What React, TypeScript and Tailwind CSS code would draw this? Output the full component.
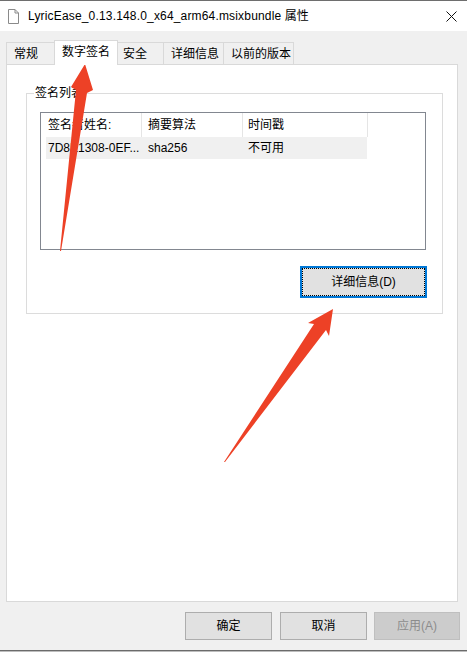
import React from "react";

function FileIcon() {
  return (
    <svg width="11" height="15" viewBox="0 0 11 15" className="block">
      <path d="M0.5 0.5 H7 L10.5 4 V14.5 H0.5 Z" fill="#fff" stroke="#8a8a8a" strokeWidth="1" />
      <path d="M7 0.5 V4 H10.5" fill="none" stroke="#8a8a8a" strokeWidth="1" />
    </svg>
  );
}

function CloseIcon() {
  return (
    <svg width="11" height="11" viewBox="0 0 11 11" className="block">
      <path d="M0.5 0.5 L10.5 10.5 M10.5 0.5 L0.5 10.5" stroke="#111" strokeWidth="1" />
    </svg>
  );
}

export default function App() {
  return (
    <div className="relative w-[467px] h-[652px] overflow-hidden bg-[#f0f0f0] flex flex-col text-[12px] text-black font-['Liberation_Sans','Noto_Sans_CJK_SC',sans-serif]">
      {/* title bar */}
      <div className="h-[31px] shrink-0 bg-white border-t border-[#6e6e6e] flex items-center">
        <div className="ml-[8px]">
          <FileIcon />
        </div>
        <div className="ml-[9px] leading-[16px] whitespace-nowrap">
          <span className="tracking-[0.17px]">LyricEase_0.13.148.0_x64_arm64.msixbundle</span> 属性
        </div>
        <div className="ml-auto mr-[10px]">
          <CloseIcon />
        </div>
      </div>

      {/* tabs */}
      <div className="mt-[9px] pl-[6px] h-[24px] flex items-end shrink-0">
        <div className="w-[49px] h-[22px] border-t border-l border-r border-[#d9d9d9] flex items-center pl-[7px] leading-[16px]">
          常规
        </div>
        <div className="relative z-10 -ml-px w-[64px] h-[25px] -mb-px bg-white border-t border-l border-r border-[#d9d9d9] flex items-center pl-[7px] pb-[2px] leading-[16px]">
          数字签名
        </div>
        <div className="-ml-px w-[47px] h-[22px] border-t border-l border-r border-[#d9d9d9] flex items-center pl-[5px] leading-[16px]">
          安全
        </div>
        <div className="-ml-px w-[61px] h-[22px] border-t border-l border-r border-[#d9d9d9] flex items-center pl-[7px] leading-[16px]">
          详细信息
        </div>
        <div className="-ml-px w-[71px] h-[22px] border-t border-l border-r border-[#d9d9d9] flex items-center pl-[7px] leading-[16px]">
          以前的版本
        </div>
      </div>

      {/* panel */}
      <div className="ml-[6px] w-[452px] h-[538px] shrink-0 bg-white border border-[#d9d9d9]">
        {/* group box */}
        <div className="relative ml-[19px] mt-[28px] w-[417px] h-[221px] border border-[#dcdcdc]">
          <div className="absolute left-[7px] top-[-9px] bg-white px-[1px] leading-[16px]">签名列表</div>

          {/* list view */}
          <div className="ml-[13px] mt-[18px] w-[386px] h-[138px] border border-[#828790] bg-white">
            <div className="flex h-[24px]">
              <div className="w-[101px] border-r border-[#e5e5e5] pl-[7px] flex items-center leading-[16px]">
                签名者姓名:
              </div>
              <div className="w-[101px] border-r border-[#e5e5e5] pl-[6px] flex items-center leading-[16px]">
                摘要算法
              </div>
              <div className="w-[125px] border-r border-[#e5e5e5] pl-[5px] flex items-center leading-[16px]">
                时间戳
              </div>
            </div>
            <div className="ml-[5px] w-[321px] h-[22px] bg-[#f0f0f0] flex items-center leading-[16px]">
              <div className="w-[95px] pl-[2px] whitespace-nowrap">7D8E1308-0EF...</div>
              <div className="w-[101px] pl-[7px]">sha256</div>
              <div className="w-[125px] pl-[6px]">不可用</div>
            </div>
          </div>

          <div className="flex justify-end pr-[15px] mt-[16px]">
            <div className="w-[127px] h-[32px] border-2 border-[#0078d7] bg-[#e1e1e1]">
              <div className="w-full h-full border border-dotted border-black flex items-center justify-center leading-[16px]">
                详细信息(D)
              </div>
            </div>
          </div>
        </div>
      </div>

      {/* bottom buttons */}
      <div className="mt-[10px] flex justify-end pr-[7px] shrink-0">
        <div className="w-[87px] h-[28px] border border-[#adadad] bg-[#e1e1e1] flex items-center justify-center leading-[16px]">
          确定
        </div>
        <div className="ml-[8px] w-[87px] h-[28px] border border-[#adadad] bg-[#e1e1e1] flex items-center justify-center leading-[16px]">
          取消
        </div>
        <div className="ml-[7px] w-[86px] h-[28px] border border-[#bfbfbf] bg-[#cccccc] text-[#8c8c8c] flex items-center justify-center leading-[16px]">
          应用(A)
        </div>
      </div>

      <div className="mt-auto h-[2px] shrink-0 border-t border-[#6b6b6b] bg-[#bdbdbd]" />

      {/* annotation arrows */}
      <svg className="absolute inset-0 pointer-events-none" width="467" height="652" viewBox="0 0 467 652">
        <polygon points="60,251 76,90 71,87 85,64 93,90 87,93 61,251" fill="#ed4126" />
        <polygon points="224,462 314,324 308,323 333,309 329,336 326,330 225,462" fill="#ed4126" />
      </svg>
    </div>
  );
}
